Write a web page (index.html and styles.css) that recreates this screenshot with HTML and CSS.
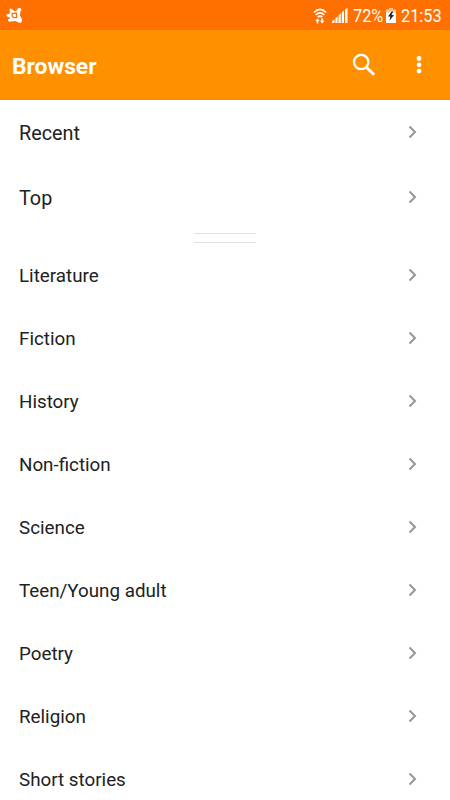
FILE: index.html
```html
<!DOCTYPE html>
<html lang="en">
<head>
    <meta charset="UTF-8">
    <meta name="viewport" content="width=device-width, initial-scale=1.0">
    <title>Browser</title>
    <link rel="stylesheet" href="styles.css">
</head>
<body>
    <!-- Shared chevron icon -->
    <svg class="sprite">
        <symbol id="chevron" viewBox="0 0 10 14">
            <path d="M1.5 1.5L7 7L1.5 12.5" fill="none" stroke="#969696" stroke-width="2"/>
        </symbol>
    </svg>

    <div class="status-bar">
        <svg class="app-logo" viewBox="0 0 18 18">
            <path d="M4.6 1.6C6.2 1.4 7 4 8.5 4.2L10.6 3.8C11 1.8 12.4 .7 14 1C15.8 1.5 15.8 3.6 14.3 4.8L14 8.5L15.8 12C16.6 15.2 14.2 16.9 12 15.2L9.8 14L4.5 14.6C2 15 1.2 13 2.8 12L4.6 10.8L1.4 9.8C-.2 9 .2 7 2 7L4 6.6L3.5 3.2C3.4 2.3 3.8 1.7 4.6 1.6Z" fill="#fff"/>
            <path d="M6.2 6.5L10.4 6.2L10.6 10.3L7.8 10.6L6.1 9Z" fill="none" stroke="#ff7000" stroke-width="1.3"/>
        </svg>
        <div class="status-icons">
            <svg class="wifi" viewBox="0 0 14 16">
                <g fill="none" stroke="#fff" stroke-width="1.7">
                    <path d="M1 4.5Q7 -1.7 13 4.5"/>
                    <path d="M2.8 7Q7 2.6 11.2 7"/>
                    <path d="M4.8 9.2Q7 7.2 9.2 9.2"/>
                </g>
                <path d="M4.5 10.5L6.8 13H5.3V15.5H3.7V13H2.2ZM9.2 15.5L6.9 12.8H8.4V10.4H10V12.8H11.5Z" fill="#fff"/>
            </svg>
            <svg class="signal" viewBox="0 0 16 15">
                <path d="M0 13.6L2.5 11.3V15H0ZM3.4 10.5L5.6 8.4V15H3.4ZM6.5 7.5L8.8 5.3V15H6.5ZM9.8 4.5L12 2.5V15H9.8ZM13 1.5L15.5 0V15H13Z" fill="#fff"/>
            </svg>
            <span class="battery-level">72%</span>
            <svg class="battery" viewBox="0 0 10 15">
                <path d="M3 0H7V1.5H10V5H0V1.5H3Z" fill="#ffc49a"/>
                <path d="M0 4.5H10V15H0Z" fill="#fff"/>
                <path d="M5.8 3.5L2 8.5H4.3L3.5 12.7L8 7H5.5L7.2 3.5Z" fill="#222"/>
            </svg>
            <span class="clock">21:53</span>
        </div>
    </div>

    <header class="app-bar">
        <h1>Browser</h1>
        <svg class="search" viewBox="0 0 24 24">
            <circle cx="9.2" cy="9" r="7.2" fill="none" stroke="#fff" stroke-width="2.3"/>
            <path d="M14.2 14L22 21.8" stroke="#fff" stroke-width="3"/>
        </svg>
        <svg class="more" viewBox="0 0 6 20">
            <g fill="#fff">
                <circle cx="3" cy="3.5" r="2.4"/>
                <circle cx="3" cy="9.8" r="2.4"/>
                <circle cx="3" cy="16.1" r="2.4"/>
            </g>
        </svg>
    </header>

    <main>
        <ul class="list list-main">
            <li><span>Recent</span><svg class="chevron"><use href="#chevron"/></svg></li>
            <li><span>Top</span><svg class="chevron"><use href="#chevron"/></svg></li>
        </ul>
        <div class="divider"></div>
        <ul class="list">
            <li><span>Literature</span><svg class="chevron"><use href="#chevron"/></svg></li>
            <li><span>Fiction</span><svg class="chevron"><use href="#chevron"/></svg></li>
            <li><span>History</span><svg class="chevron"><use href="#chevron"/></svg></li>
            <li><span>Non-fiction</span><svg class="chevron"><use href="#chevron"/></svg></li>
            <li><span>Science</span><svg class="chevron"><use href="#chevron"/></svg></li>
            <li><span>Teen/Young adult</span><svg class="chevron"><use href="#chevron"/></svg></li>
            <li><span>Poetry</span><svg class="chevron"><use href="#chevron"/></svg></li>
            <li><span>Religion</span><svg class="chevron"><use href="#chevron"/></svg></li>
            <li><span>Short stories</span><svg class="chevron"><use href="#chevron"/></svg></li>
        </ul>
    </main>
</body>
</html>
```
FILE: styles.css
```css
* {
    box-sizing: border-box;
}

body {
    margin: 0;
    height: 100vh;
    background-color: #fff;
    color: #212121;
    font-family: Roboto, "Liberation Sans", sans-serif;
    overflow: hidden;
}

.sprite {
    display: none;
}

svg {
    display: block;
    flex-shrink: 0;
}

/* Status bar */
.status-bar {
    height: 30px;
    padding: 1px 8px 0 6px;
    display: flex;
    justify-content: space-between;
    align-items: center;
    background-color: #ff7000;
    color: #fff;
    font-size: 19px;
}

.app-logo {
    width: 18px;
    height: 18px;
}

.status-icons {
    display: flex;
    align-items: center;
}

.wifi {
    width: 14px;
    height: 16px;
    margin-right: 5px;
}

.signal {
    width: 16px;
    height: 15px;
    margin-right: 5px;
}

.battery-level {
    width: 30px;
    margin-right: 3px;
}

.battery {
    width: 10px;
    height: 15px;
    margin-right: 5px;
}

.battery-level,
.clock {
    padding-top: 1px;
    line-height: 22px;
    white-space: nowrap;
    transform: scaleX(0.86);
    transform-origin: left;
}

.clock {
    width: 41px;
}

/* App bar */
.app-bar {
    height: 70px;
    padding: 0 28px 0 12px;
    display: flex;
    align-items: center;
    background-color: #ff9000;
    color: #fff;
}

.app-bar h1 {
    flex: 1;
    margin: 2px 0 0;
    font-size: 22.8px;
    font-weight: bold;
}

.search {
    width: 24px;
    height: 24px;
    margin-right: 40px;
}

.more {
    width: 6px;
    height: 20px;
}

/* Lists */
.list {
    margin: 0;
    padding: 0;
    list-style: none;
    font-size: 18.8px;
}

.list li {
    height: 63px;
    padding: 0 32px 0 19px;
    display: flex;
    justify-content: space-between;
    align-items: center;
}

.list-main {
    font-size: 19.8px;
}

.list-main li {
    height: 64.5px;
}

.list span {
    padding-top: 3px;
}

.chevron {
    width: 10px;
    height: 14px;
}

.divider {
    width: 62px;
    height: 10px;
    margin: 4px auto 0;
    border-top: 1px solid #e0e0e0;
    border-bottom: 1px solid #e0e0e0;
}
```
